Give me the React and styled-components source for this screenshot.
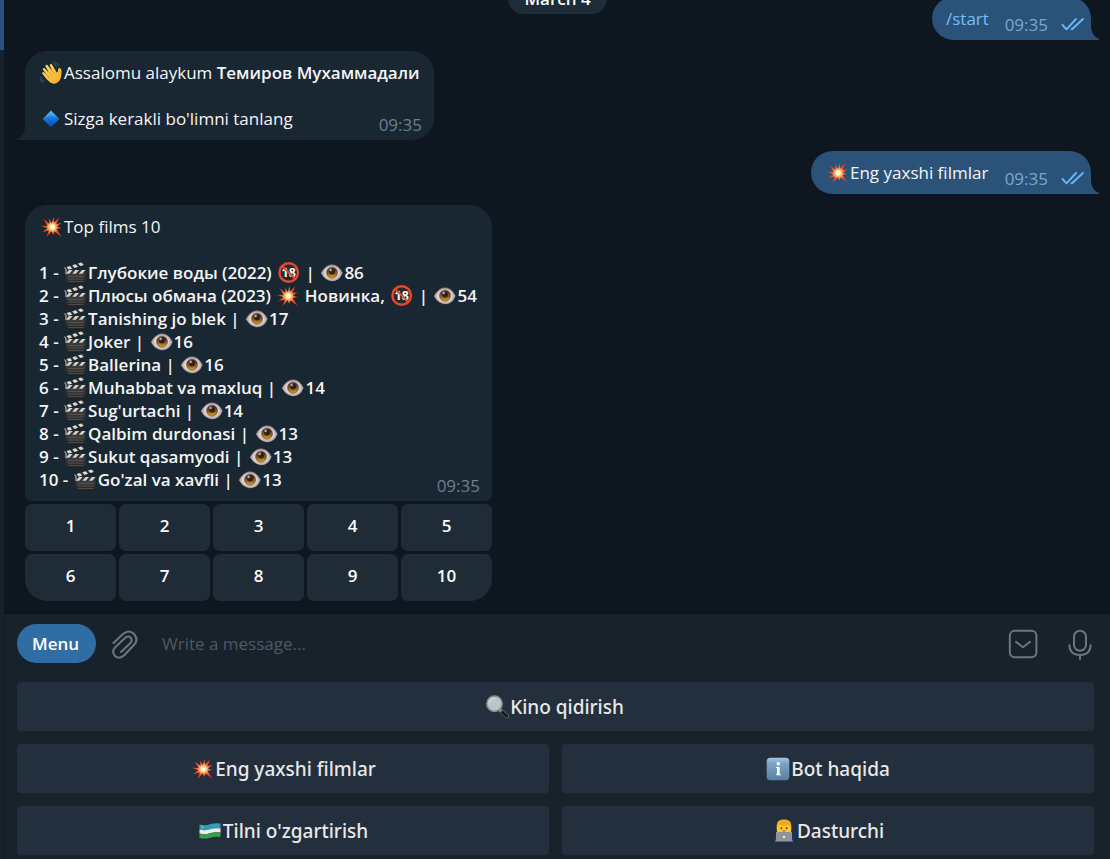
import React from "react";
import styled, { createGlobalStyle, css } from "styled-components";

const GlobalStyle = createGlobalStyle`
  * { box-sizing: border-box; }
  body { margin: 0; background: #0e1620; overflow: hidden; }
  button { border: 0; padding: 0; font: inherit; color: inherit; }
`;

const Window = styled.div`
  display: flex;
  width: 1110px;
  height: 859px;
  overflow: hidden;
  background: #0e1620;
  color: #f5f5f5;
  font: 400 17px/23px "Open Sans", "Noto Sans", sans-serif;
`;

const SideStrip = styled.aside`
  width: 4px;
  flex: none;
  background: #17212b;
`;

const ActiveChat = styled.div`
  height: 50px;
  background: #2b5278;
`;

const Main = styled.main`
  position: relative;
  flex: 1;
  min-width: 0;
  display: flex;
  flex-direction: column;
`;

const DatePill = styled.div`
  position: absolute;
  top: -17px;
  left: 504px;
  width: 99px;
  height: 31px;
  border-radius: 16px;
  background: #1e2c38;
  color: #fff;
  font-weight: 600;
  line-height: 31px;
  text-align: center;
`;

const History = styled.section`
  height: 613px;
  flex: none;
  display: flex;
  flex-direction: column;
  justify-content: flex-end;
  gap: 11px;
  padding: 0 19px 12px 21px;
  overflow: hidden;
`;

const Bubble = styled.article`
  position: relative;
  display: flex;
  flex: none;
  align-self: ${(p) => (p.$out ? "flex-end" : "flex-start")};
  width: ${(p) => p.$width}px;
  height: ${(p) => p.$height}px;
  padding: 10px 14px 0;
  background: ${(p) => (p.$out ? "#2b5278" : "#192733")};
  border-radius: ${(p) =>
    p.$keyboard ? "22px 22px 7px 7px" : p.$out ? "22px 22px 0 22px" : "22px 22px 22px 0"};
`;

const TailSvg = styled.svg`
  position: absolute;
  bottom: 0;
  width: 9px;
  height: 14px;
  ${(p) =>
    p.$out
      ? css`right: -8px;`
      : css`left: -8px; transform: scaleX(-1);`}
`;

const Lines = styled.div`
  white-space: pre;
`;

const Line = styled.div`
  display: flex;
  height: 23px;
  white-space: pre;
  font-weight: ${(p) => (p.$bold ? 600 : 400)};
`;

const Bold = styled.span`
  font-weight: 600;
`;

const Command = styled.span`
  color: #78bef8;
`;

const Meta = styled.span`
  position: absolute;
  right: ${(p) => (p.$out ? 6 : 12)}px;
  bottom: 4px;
  display: flex;
  align-items: center;
  gap: 13px;
  color: ${(p) => (p.$out ? "#7da8d3" : "#6d7f8f")};
`;

const CheckSvg = styled.svg`
  width: 24px;
  height: 14px;
  margin-bottom: 2px;
`;

const EmojiSvg = styled.svg`
  flex: none;
  display: block;
  width: 24px;
  height: 24px;
  margin-right: 1px;
`;

const HiddenDefs = styled.svg`
  position: absolute;
  width: 0;
  height: 0;
`;

const KeyboardMessage = styled.div`
  display: flex;
  flex: none;
  flex-direction: column;
  gap: 3px;
`;

const InlineKeyboard = styled.div`
  display: grid;
  grid-template-columns: repeat(5, 91px);
  grid-auto-rows: 47px;
  gap: 3px;
`;

const InlineButton = styled.button`
  height: 47px;
  padding-bottom: 4px;
  border-radius: 7px;
  background: #1f2c38;
  color: #fff;
  font-weight: 600;
  &:nth-child(6) { border-bottom-left-radius: 22px; }
  &:nth-child(10) { border-bottom-right-radius: 22px; }
`;

const Composer = styled.footer`
  flex: 1;
  padding: 10px 16px 0 12px;
  background: #18222b;
  border-top: 1px solid #0b131a;
  border-left: 1px solid #0f1820;
`;

const InputRow = styled.div`
  display: flex;
  align-items: center;
  height: 39px;
  margin-right: -2px;
  margin-bottom: 19px;
`;

const MenuButton = styled.button`
  width: 79px;
  height: 39px;
  border-radius: 20px;
  background: #2f6ea5;
  color: #fff;
  font-weight: 600;
  padding-right: 2px;
`;

const Placeholder = styled.span`
  flex: 1;
  margin-left: 21px;
  color: #4c5964;
`;

const ToolIcon = styled.svg`
  flex: none;
  width: 32px;
  height: 34px;
  margin-left: ${(p) => p.$left || 0}px;
  fill: none;
  stroke: #6b7780;
  stroke-width: 2;
  stroke-linecap: round;
  stroke-linejoin: round;
`;

const ReplyKeyboard = styled.div`
  display: grid;
  grid-template-columns: 1fr 1fr;
  grid-auto-rows: 49px;
  gap: 13px;
`;

const ReplyButton = styled.button`
  display: flex;
  align-items: center;
  justify-content: center;
  grid-column: ${(p) => (p.$wide ? "1 / -1" : "auto")};
  padding-right: ${(p) => (p.$wide ? 2 : 0)}px;
  border-radius: 4px;
  background: #242f3d;
  color: #e9e9e9;
  font: 500 19px/26px "Noto Sans", "Open Sans", sans-serif;
`;

function Tail({ out }) {
  return (
    <TailSvg $out={out} viewBox="0 0 9 14" fill={out ? "#2b5278" : "#192733"}>
      <path d="M0 0H1C1 6 4 11 9 13V14H0Z" />
    </TailSvg>
  );
}

function Defs() {
  return (
    <HiddenDefs aria-hidden="true">
      <defs>
        <linearGradient id="hand" x1="0" y1="0" x2="1" y2="1">
          <stop offset="0" stopColor="#ffdc62" /><stop offset="1" stopColor="#f5a928" />
        </linearGradient>
        <radialGradient id="boom" gradientUnits="userSpaceOnUse" cx="13.3" cy="12" r="11.500">
          <stop offset="0" stopColor="#fffde0" /><stop offset=".2" stopColor="#ffe79a" />
          <stop offset=".36" stopColor="#fba05c" /><stop offset=".55" stopColor="#ee5630" />
          <stop offset="1" stopColor="#d92a16" />
        </radialGradient>
        <linearGradient id="gem" x1="0" y1="0" x2="0" y2="1">
          <stop offset="0" stopColor="#6ab8f6" /><stop offset=".35" stopColor="#1d84e4" />
          <stop offset="1" stopColor="#0744a4" />
        </linearGradient>
        <radialGradient id="eyeball">
          <stop offset=".5" stopColor="#f1eaea" /><stop offset="1" stopColor="#a8969b" />
        </radialGradient>
        <linearGradient id="iris" x1="0" y1="0" x2="0" y2="1">
          <stop offset=".2" stopColor="#4e3220" /><stop offset=".65" stopColor="#9a6a18" />
          <stop offset="1" stopColor="#dda61c" />
        </linearGradient>
        <linearGradient id="slate" x1="0" y1="0" x2="0" y2="1">
          <stop offset="0" stopColor="#4a4a4a" /><stop offset="1" stopColor="#202020" />
        </linearGradient>
        <linearGradient id="info" x1="0" y1="0" x2="0" y2="1">
          <stop offset="0" stopColor="#a4c8e4" /><stop offset=".25" stopColor="#7ba4c8" />
          <stop offset="1" stopColor="#58809f" />
        </linearGradient>
      </defs>
    </HiddenDefs>
  );
}

const drawings = {
  wave: (
    <>
      <g fill="none" stroke="#526371" strokeWidth=".8" strokeLinecap="round">
        <path d="M14 2Q17 3 17.500 6M16 1Q19 2.500 19.500 5M1.500 16Q2 19 5 20M1 18.500Q2 21 4 21.500" />
      </g>
      <path d="M7.400 18 3.200 12.500Q3 10.800 4.900 11.200L8 14.200 3.800 8.500Q3.700 6.800 5.400 7L10 11.800 6.400 5.300Q6.600 3.400 8.400 4L13.200 10 10.600 4Q11.300 2.400 12.800 3.300L17.800 11.500Q19.200 11.300 19 9Q19.100 6.600 20.900 7Q23.200 7.800 22.400 12.500Q22.500 18 19.500 20.700Q15.500 24.200 11.200 21.600Z" fill="url(#hand)" />
      <path d="M8 14.200 11 17M10 11.800 13.500 15M13.200 10 16 13" stroke="#d98a18" strokeWidth=".8" fill="none" />
    </>
  ),
  boom: (
    <>
      <path d="M12.800 8 14.600 1.500 15.200 7.400 20.600 1.800 17.300 9 22.800 8 17.900 11.600 22.500 13 17.600 13.900 22.900 22.300 15.600 16.500 14.200 20 12.600 16.300 7.500 22.300 9.800 15.600 3 17.200 8.300 13.300 1.800 10.800 8.600 11 4.300 4 10.600 8.800 9.800 3.200Z" fill="url(#boom)" />
      <circle cx="13.300" cy="12" r="2.200" fill="#fffce0" />
    </>
  ),
  gem: (
    <>
      <path d="M12 3.500 20.300 12 12 20.300 3.700 12Z" fill="url(#gem)" />
      <path d="M12 3.500 19.500 11 12 9 4.500 11Z" fill="#65b7f4" opacity=".35" />
    </>
  ),
  clapper: (
    <>
      <path d="M1.800 6.500 20.500 .8 21.500 3.800 3 9.700Z" fill="#303030" />
      <path d="M3.600 6 7 5 9.200 7.600 5.700 8.700ZM9.300 4.200 12.700 3.200 15 5.800 11.500 6.900ZM15 2.500 18.400 1.400 20.800 4 17.300 5.100Z" fill="#dcdcd5" />
      <path d="M2.500 9H22.500V21.500Q22.500 22.800 21.200 22.800H4.300Q3 22.800 3 21.500Z" fill="url(#slate)" />
      <path d="M2.500 8.800H22.500V13H2.500Z" fill="#333" />
      <path d="M6 9H9.600L6.300 12.700H2.800ZM12.500 9H16L12.800 12.700H9.300ZM19 9H22.500L19.300 12.700H15.800Z" fill="#d4d4cd" />
      <path d="M5 15.600H20.500M5 18.100H20.500M5 20.600H20.500" stroke="#6c6c6c" strokeWidth=".6" />
      <path d="M1.500 6.500 3 8.500V13" stroke="#aaa" strokeWidth="1.200" fill="none" />
    </>
  ),
  eye: (
    <g transform="translate(1 0)">
      <path d="M1 12.300Q5.500 3.800 12 3.800Q18.500 3.800 22.500 12Q19.500 20.200 12 20.200Q5.500 20 1 12.300Z" fill="url(#eyeball)" />
      <path d="M1 12.300Q5.500 3.800 12 3.800Q18.500 3.800 22.500 12" fill="none" stroke="#85767c" strokeWidth=".7" />
      <circle cx="12" cy="11.700" r="5.500" fill="url(#iris)" stroke="#5c4331" strokeWidth=".6" />
      <circle cx="12" cy="10.600" r="3" fill="#2e201e" />
      <circle cx="10.600" cy="8.900" r="1.300" fill="#b8a4a6" />
    </g>
  ),
  adults: (
    <g transform="translate(.7 0)">
      <circle cx="12" cy="11.500" r="9.300" fill="#292929" stroke="#ea4530" strokeWidth="2.400" />
      <text x="12" y="16" textAnchor="middle" fontFamily="Open Sans, sans-serif" fontSize="12.500" fontWeight="700" fill="#fff">18</text>
      <path d="M5.500 5 18.500 18" stroke="#ea4530" strokeWidth="2" />
    </g>
  ),
  search: (
    <>
      <path d="M15.500 15.500 21.800 21.300" stroke="#6c7072" strokeWidth="4.200" strokeLinecap="round" />
      <path d="M16.500 16.500 21.600 21.200" stroke="#17191b" strokeWidth="3" strokeLinecap="round" />
      <path d="M14.300 14.500 16.500 16.500" stroke="#8b8f91" strokeWidth="2" />
      <circle cx="9.500" cy="8.700" r="7.700" fill="#bbc4c9" stroke="#858b8e" strokeWidth="1.500" />
      <path d="M4 8Q5.500 3.500 10 3.400" stroke="#d5dcdf" strokeWidth="1.400" fill="none" />
    </>
  ),
  info: (
    <>
      <rect x=".7" y=".7" width="22.600" height="22.600" rx="3.500" fill="url(#info)" />
      <circle cx="12.300" cy="6.800" r="1.800" fill="#fff" />
      <path d="M9.800 10H13.600V17.200H15V18.300H9.800V17.200H11V11.100H9.800Z" fill="#fff" />
    </>
  ),
  flag: (
    <>
      <path d="M1.500 5.500Q7 7 12 5.300Q17 3.500 22.500 4.500V9.500Q17 8.500 12 10.200Q7 12 1.500 10.500Z" fill="#2f9db4" />
      <path d="M1.500 10.500Q7 12 12 10.200Q17 8.500 22.500 9.500V13.500Q17 12.500 12 14.300Q7 16 1.500 14.500Z" fill="#eceeee" />
      <path d="M1.500 14.500Q7 16 12 14.300Q17 12.500 22.500 13.500V18Q17 17 12 18.700Q7 20.300 1.500 19Z" fill="#36a046" />
      <circle cx="4.500" cy="8" r=".8" fill="#c4e4ea" />
    </>
  ),
  developer: (
    <>
      <path d="M2.500 22.500Q2.500 16 8 14.500H16Q21.500 16 21.500 22.500Z" fill="#2530b9" />
      <path d="M4.800 7Q4.800 .8 12 .8Q19.200 .8 19.200 7V12Q17 17 12 17Q7 17 4.800 12Z" fill="#ffc83b" />
      <path d="M4.800 9V6Q5 .5 12 .5Q19 .5 19.200 6V9L17.500 6Q12 7 6.500 5.500Z" fill="#f0aa1e" />
      <circle cx="9.300" cy="9.200" r="1" fill="#6a421a" /><circle cx="14.700" cy="9.200" r="1" fill="#6a421a" />
      <path d="M10.300 11.700Q12 12.500 13.700 11.700" stroke="#a9641d" fill="none" />
      <path d="M4 13H20V21L21 22.500H3L4 21Z" fill="#929499" />
      <circle cx="12" cy="18" r="1.200" fill="#f0f0f0" />
    </>
  ),
};

function Emoji({ name }) {
  return <EmojiSvg viewBox="0 0 24 24" aria-hidden="true">{drawings[name]}</EmojiSvg>;
}

function Checks() {
  return (
    <CheckSvg viewBox="0 0 24 14" fill="none" stroke="#65b9f8" strokeWidth="1.900" strokeLinecap="round" strokeLinejoin="round">
      <path d="M1.500 8 5.500 12.300 15 2M10.500 12.300 11 12.300 22 2" />
    </CheckSvg>
  );
}

const films = [
  ["1", "Глубокие воды (2022) ", ["adults"], "86"],
  ["2", "Плюсы обмана (2023) ", ["boom", " Новинка, ", "adults"], "54"],
  ["3", "Tanishing jo blek", [], "17"],
  ["4", "Joker", [], "16"],
  ["5", "Ballerina", [], "16"],
  ["6", "Muhabbat va maxluq", [], "14"],
  ["7", "Sug'urtachi", [], "14"],
  ["8", "Qalbim durdonasi", [], "13"],
  ["9", "Sukut qasamyodi", [], "13"],
  ["10", "Go'zal va xavfli", [], "13"],
];

function Film({ film: [number, title, tags, views] }) {
  return (
    <Line $bold>
      <span>{number} - </span>
      <Emoji name="clapper" />
      <span>{title}</span>
      {tags.map((tag, i) => drawings[tag] ? <Emoji key={i} name={tag} /> : <span key={i}>{tag}</span>)}
      <span> | </span>
      <Emoji name="eye" />
      <span>{views}</span>
    </Line>
  );
}

const replies = [
  ["search", "Kino qidirish", true],
  ["boom", "Eng yaxshi filmlar"],
  ["info", "Bot haqida"],
  ["flag", "Tilni o'zgartirish"],
  ["developer", "Dasturchi"],
];

export default function App() {
  return (
    <>
      <GlobalStyle />
      <Defs />
      <Window>
        <SideStrip><ActiveChat /></SideStrip>
        <Main>
          <History>
            <Bubble $out $width={159} $height={43}>
              <Command>/start</Command>
              <Meta $out>09:35<Checks /></Meta>
              <Tail out />
            </Bubble>
            <Bubble $width={409} $height={89}>
              <Lines>
                <Line><Emoji name="wave" />Assalomu alaykum <Bold>Темиров Мухаммадали</Bold></Line>
                <Line />
                <Line><Emoji name="gem" />Sizga kerakli bo'limni tanlang</Line>
              </Lines>
              <Meta>09:35</Meta>
              <Tail />
            </Bubble>
            <Bubble $out $width={280} $height={43}>
              <Line><Emoji name="boom" />Eng yaxshi filmlar</Line>
              <Meta $out>09:35<Checks /></Meta>
              <Tail out />
            </Bubble>
            <KeyboardMessage>
              <Bubble $keyboard $width={467} $height={296}>
                <Lines>
                  <Line><Emoji name="boom" />Top films 10</Line>
                  <Line />
                  {films.map((film) => <Film key={film[0]} film={film} />)}
                </Lines>
                <Meta>09:35</Meta>
              </Bubble>
              <InlineKeyboard>
                {films.map(([number]) => <InlineButton key={number}>{number}</InlineButton>)}
              </InlineKeyboard>
            </KeyboardMessage>
          </History>
          <DatePill>March 4</DatePill>
          <Composer>
            <InputRow>
              <MenuButton>Menu</MenuButton>
              <ToolIcon $left={13} viewBox="0 -1 32 34">
                <path d="M4.500 15 14 6Q20 1 25 6Q30 12 25 17L15.500 27Q10 32 6 28Q2 23.500 6.500 19L16.500 9.500Q19.500 7.500 21.500 9.500Q24 12.500 21 15.500L12 24" />
              </ToolIcon>
              <Placeholder>Write a message...</Placeholder>
              <ToolIcon viewBox="0 0 32 34">
                <rect x="2.800" y="3.700" width="26.600" height="26.600" rx="5" />
                <path d="M9 14.800 16 20.300 23 14.800" />
              </ToolIcon>
              <ToolIcon $left={25} viewBox="0 0 32 34">
                <rect x="10" y="3.700" width="12" height="20" rx="6" />
                <path d="M5.300 18.200Q6 28 16 28Q26 28 26.700 18.200M16 28V32" />
              </ToolIcon>
            </InputRow>
            <ReplyKeyboard>
              {replies.map(([icon, text, wide]) => (
                <ReplyButton key={text} $wide={wide}><Emoji name={icon} />{text}</ReplyButton>
              ))}
            </ReplyKeyboard>
          </Composer>
        </Main>
      </Window>
    </>
  );
}
